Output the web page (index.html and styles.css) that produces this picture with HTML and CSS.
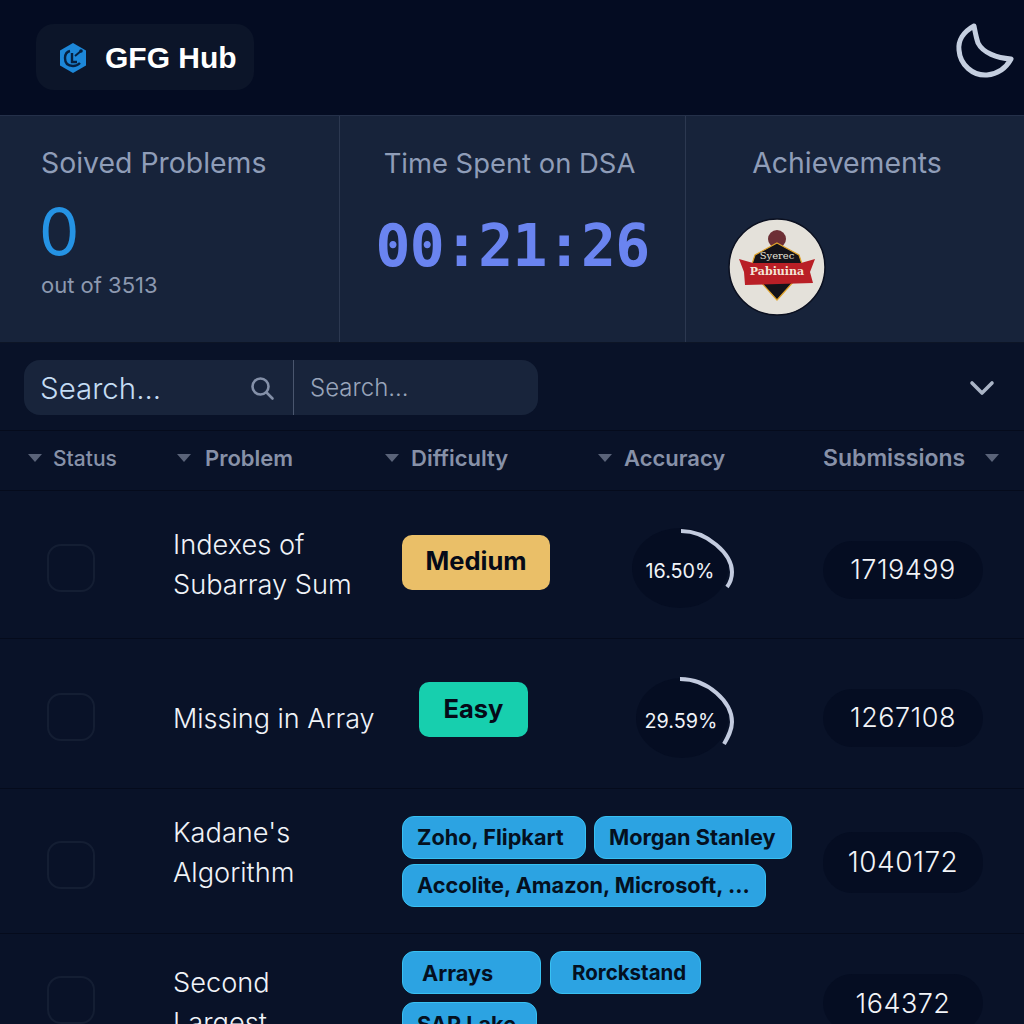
FILE: index.html
```html
<!DOCTYPE html>
<html lang="en">
<head>
    <meta charset="UTF-8">
    <meta name="viewport" content="width=device-width, initial-scale=1.0">
    <title>GFG Hub</title>
    <link rel="stylesheet" href="styles.css">
</head>
<body>
    <header class="header">
        <div class="brand">
            <svg class="brand-icon" width="28" height="32" viewBox="0 0 28 32">
                <path d="M14 1 L27 8.5 V23.5 L14 31 L1 23.5 V8.5 Z" fill="#1d87d8"/>
                <path d="M11 9 C7 10 6 13 6 16 C6 21 9 24 14 24 C17 24 19 23 21 21" fill="none" stroke="#06203f" stroke-width="2.4"/>
                <path d="M13 11 V20 H18" fill="none" stroke="#06203f" stroke-width="2.4"/>
                <path d="M16 14 L22 9" stroke="#06203f" stroke-width="2"/>
                <circle cx="22" cy="9" r="1.8" fill="#06203f"/>
            </svg>
            <span class="brand-name">GFG Hub</span>
        </div>
        <svg class="theme-icon" width="60" height="60" viewBox="0 0 60 60">
            <path d="M19 5 C8 11 3 20 4 29 C5 44 18 55 32 54 C43 53 51 47 56 38 C42 37 28 32 23 22 C21 16 20 10 19 5 Z" fill="none" stroke="#c5cfe0" stroke-width="5" stroke-linejoin="round"/>
        </svg>
    </header>

    <section class="stats">
        <div class="stat stat-solved">
            <h2 class="stat-title">Soived Problems</h2>
            <div class="solved-count">0</div>
            <div class="solved-total">out of 3513</div>
        </div>
        <div class="stat stat-time">
            <h2 class="stat-title">Time Spent on DSA</h2>
            <div class="timer">00:21:26</div>
        </div>
        <div class="stat stat-achievements">
            <h2 class="stat-title">Achievements</h2>
            <svg class="medal" width="98" height="98" viewBox="0 0 98 98">
                <circle cx="49" cy="49" r="48" fill="#e4e1da" stroke="#0b1020" stroke-width="1.5"/>
                <circle cx="49" cy="21" r="9" fill="#6d2f35"/>
                <path d="M49 25 L71 37 L76 52 L49 82 L22 52 L27 37 Z" fill="#14131a" stroke="#e0a32a" stroke-width="1.2"/>
                <path d="M11 41 L25 45 H73 L87 41 L82 54 L85 65 L17 67 L16 54 Z" fill="#b91f26"/>
                <text class="medal-top" x="49" y="41" text-anchor="middle">Syerec</text>
                <text class="medal-main" x="49" y="57" text-anchor="middle">Pabiuina</text>
            </svg>
        </div>
    </section>

    <section class="toolbar">
        <div class="search">
            <div class="search-main">
                <span class="search-text">Search...</span>
                <svg width="26" height="26" viewBox="0 0 26 26">
                    <circle cx="11.5" cy="11.5" r="8" fill="none" stroke="#8490a8" stroke-width="2.6"/>
                    <path d="M17.5 17.5 L23.5 23.5" stroke="#8490a8" stroke-width="2.6" stroke-linecap="round"/>
                </svg>
            </div>
            <div class="search-alt">Search...</div>
        </div>
        <svg class="toolbar-chevron" width="26" height="16" viewBox="0 0 26 16">
            <path d="M3 3 L13 13 L23 3" fill="none" stroke="#aab4c6" stroke-width="3.6" stroke-linecap="round" stroke-linejoin="round"/>
        </svg>
    </section>

    <div class="table-head">
        <div class="th th-status"><i class="caret"></i>Status</div>
        <div class="th th-problem"><i class="caret"></i>Problem</div>
        <div class="th th-difficulty"><i class="caret"></i>Difficulty</div>
        <div class="th th-accuracy"><i class="caret"></i>Accuracy</div>
        <div class="th th-submissions">Submissions<i class="caret"></i></div>
    </div>

    <main class="rows">
        <div class="row row-1">
            <div class="check"></div>
            <div class="problem">Indexes of<br>Subarray Sum</div>
            <div class="cell-tags"><span class="level level-medium">Medium</span></div>
            <div class="accuracy">
                <svg width="104" height="84" viewBox="0 0 104 84">
                    <ellipse cx="48" cy="42" rx="48" ry="40" fill="#050d22"/>
                    <path d="M49 5 C75 5 100 28 100 46 C100 52 98 57 95 61" fill="none" stroke="#c3cbdf" stroke-width="4"/>
                </svg>
                <span class="accuracy-value">16.50%</span>
            </div>
            <div class="subs">1719499</div>
        </div>
        <div class="row row-2">
            <div class="check"></div>
            <div class="problem">Missing in Array</div>
            <div class="cell-tags"><span class="level level-easy">Easy</span></div>
            <div class="accuracy">
                <svg width="104" height="84" viewBox="0 0 104 84">
                    <ellipse cx="50" cy="42" rx="46" ry="40" fill="#050d22"/>
                    <path d="M48 3 C76 3 100 26 100 46 C100 54 96 61 92 68" fill="none" stroke="#c3cbdf" stroke-width="4"/>
                </svg>
                <span class="accuracy-value">29.59%</span>
            </div>
            <div class="subs">1267108</div>
        </div>
        <div class="row row-3">
            <div class="check"></div>
            <div class="problem">Kadane's<br>Algorithm</div>
            <div class="tags">
                <span class="tag tag-zoho">Zoho, Flipkart</span>
                <span class="tag tag-morgan">Morgan Stanley</span>
                <span class="tag tag-accolite">Accolite, Amazon, Microsoft, ...</span>
            </div>
            <div class="subs">1040172</div>
        </div>
        <div class="row row-4">
            <div class="check"></div>
            <div class="problem">Second<br>Largest</div>
            <div class="tags">
                <span class="tag tag-arrays">Arrays</span>
                <span class="tag tag-rock">Rorckstand</span>
                <span class="tag tag-sap">SAP Lake</span>
            </div>
            <div class="subs">164372</div>
        </div>
    </main>
</body>
</html>
```

FILE: styles.css
```css
* {
    margin: 0;
    padding: 0;
    box-sizing: border-box;
}

html, body {
    height: 1024px;
    overflow: hidden;
}

body {
    font-family: 'Inter', 'Liberation Sans', sans-serif;
    background: #091228;
    color: #eef2f8;
}

/* Top bar */
.header {
    height: 115px;
    background: #040c22;
    padding: 24px 9px 0 36px;
    display: flex;
    justify-content: space-between;
    align-items: flex-start;
}

.brand {
    width: 218px;
    height: 66px;
    background: #0c1529;
    border-radius: 18px;
    display: flex;
    align-items: center;
    gap: 18px;
    padding: 2px 0 0 23px;
}

.brand-name {
    font-family: 'Liberation Sans', sans-serif;
    font-size: 30px;
    font-weight: 700;
    color: #fff;
}

.theme-icon {
    margin-top: -3px;
}

/* Stat cards */
.stats {
    height: 228px;
    display: grid;
    grid-template-columns: 340px 346px 1fr;
    background: #17233a;
    border-top: 1px solid #243049;
    border-bottom: 1px solid #0d1526;
}

.stat {
    padding-top: 30px;
    border-right: 1px solid #2c3850;
}

.stat:last-child {
    border-right: none;
}

.stat-title {
    font-size: 28.4px;
    font-weight: 400;
    color: #8f9db8;
    line-height: 34px;
}

.stat-solved {
    padding-left: 41px;
}

.solved-count {
    font-size: 64px;
    line-height: 62px;
    color: #2593e4;
    margin-top: 21px;
    margin-left: -2px;
}

.solved-total {
    font-size: 22px;
    color: #8d99b0;
    margin-top: 9px;
}

.stat-time {
    text-align: center;
}

.stat-time .stat-title {
    font-size: 27.4px;
    padding-right: 6px;
}

.timer {
    font-family: 'DejaVu Sans Mono', monospace;
    font-size: 58px;
    font-weight: 700;
    color: #6a84f0;
    margin-top: 32px;
    letter-spacing: -0.7px;
}

.stat-achievements {
    text-align: center;
    padding-right: 16px;
}

.medal {
    display: block;
    margin: 38px 0 0 42px;
}

.medal-top {
    font-family: 'DejaVu Serif', serif;
    font-size: 10px;
    fill: #e8e4d8;
}

.medal-main {
    font-family: 'DejaVu Serif', serif;
    font-size: 11px;
    font-weight: 700;
    fill: #f4e6d8;
}

/* Search row */
.toolbar {
    height: 87px;
    display: flex;
    align-items: center;
    justify-content: space-between;
    padding: 2px 29px 0 24px;
    background: #091228;
}

.search {
    width: 514px;
    height: 55px;
    background: #18243b;
    border-radius: 16px;
    display: flex;
}

.search-main {
    width: 270px;
    display: flex;
    align-items: center;
    justify-content: space-between;
    padding: 0 18px 0 16px;
    border-right: 1px solid #4a566e;
}

.search-text {
    font-size: 29.5px;
    color: #c4dcf3;
    font-weight: 300;
}

.search-alt {
    padding-left: 16px;
    font-size: 24px;
    line-height: 55px;
    color: #98a4ba;
    font-weight: 300;
}

/* Table */
.table-head {
    height: 61px;
    padding-bottom: 5px;
    display: grid;
    grid-template-columns: 174px 208px 213px 225px 1fr;
    align-items: center;
    border-top: 1px solid #050b1c;
    border-bottom: 1px solid #050b1c;
    font-size: 22px;
    font-weight: 600;
    color: #8791a8;
}

.th {
    display: flex;
    align-items: center;
    gap: 14px;
    padding-left: 3px;
    white-space: nowrap;
}

.th-status {
    padding-left: 28px;
    gap: 11px;
    font-size: 21px;
    font-weight: 500;
}

.th-difficulty, .th-accuracy {
    gap: 12px;
}

.th-submissions {
    gap: 20px;
    font-size: 23px;
}

.caret {
    width: 0;
    height: 0;
    border-left: 7px solid transparent;
    border-right: 7px solid transparent;
    border-top: 8px solid #5a6379;
}

.row {
    display: grid;
    grid-template-columns: 174px 228px 420px 1fr;
    align-items: center;
    border-bottom: 1px solid #050b1c;
}

.row-1 {
    height: 148px;
    grid-template-columns: 174px 228px 224px 196px 1fr;
}

.row-2 {
    height: 150px;
    grid-template-columns: 174px 228px 224px 196px 1fr;
}

.row-3 {
    height: 145px;
}

.row-4 {
    height: 150px;
    align-items: start;
    padding-top: 17px;
}

.check {
    width: 48px;
    height: 48px;
    margin: 6px 0 0 47px;
    border: 2px solid #141e33;
    border-radius: 14px;
}

.row-3 .check {
    margin-top: 8px;
}

.row-4 .check {
    margin-top: 25px;
}

.problem {
    font-size: 27.2px;
    line-height: 40px;
    font-weight: 300;
    color: #f0f3f8;
    margin-left: -1px;
}

.row-2 .problem {
    margin-top: 10px;
    font-size: 27px;
}

.row-3 .problem {
    margin-bottom: 16px;
}

.row-4 .problem {
    margin-top: 12px;
}

.level {
    display: inline-flex;
    align-items: center;
    justify-content: center;
    font-size: 25.5px;
    font-weight: 700;
    color: #050a18;
    border-radius: 10px;
    padding-bottom: 3px;
}

.level-medium {
    width: 148px;
    height: 55px;
    background: #eabf68;
    margin-bottom: 5px;
}

.level-easy {
    width: 109px;
    height: 55px;
    margin: 0 0 9px 17px;
    padding-bottom: 2px;
    background: #17cfae;
}

.accuracy {
    width: 104px;
    height: 84px;
    position: relative;
    margin: 6px 0 0 6px;
}

.row-2 .accuracy {
    margin-top: 8px;
}

.accuracy svg {
    display: block;
}

.accuracy-value {
    position: absolute;
    left: 0;
    top: 33px;
    width: 96px;
    text-align: center;
    font-size: 19.8px;
    color: #f0f3f8;
    font-weight: 400;
}

.row-2 .accuracy-value {
    width: 98px;
}

.subs {
    width: 160px;
    height: 58px;
    margin: 10px 0 0 1px;
    border-radius: 29px;
    background: #050d22;
    display: flex;
    align-items: center;
    justify-content: center;
    font-size: 27px;
    font-weight: 300;
    color: #f2f4f8;
    letter-spacing: 0.5px;
}

.row-2 .subs {
    margin-top: 8px;
}

.row-3 .subs {
    height: 61px;
    margin: 2px 0 0 1px;
    font-size: 28px;
}

.row-4 .subs {
    margin: 23px 0 0 1px;
}

.tags {
    display: flex;
    flex-wrap: wrap;
    gap: 5px 8px;
    width: 400px;
}

.row-4 .tags {
    gap: 8px;
}

.tag {
    height: 43px;
    padding: 0 14px;
    display: inline-flex;
    align-items: center;
    background: #2ca3e2;
    border: 1px solid #38c0f2;
    border-radius: 12px;
    color: #04101f;
    font-size: 21.7px;
    font-weight: 700;
    white-space: nowrap;
}

.tag-zoho {
    width: 184px;
}

.tag-morgan {
    width: 198px;
}

.tag-accolite {
    width: 364px;
}

.tag-arrays {
    width: 139px;
    padding-left: 19px;
}

.tag-rock {
    width: 151px;
    padding-left: 21px;
    margin-left: 1px;
    font-size: 20.5px;
}

.tag-sap {
    width: 135px;
}
```
